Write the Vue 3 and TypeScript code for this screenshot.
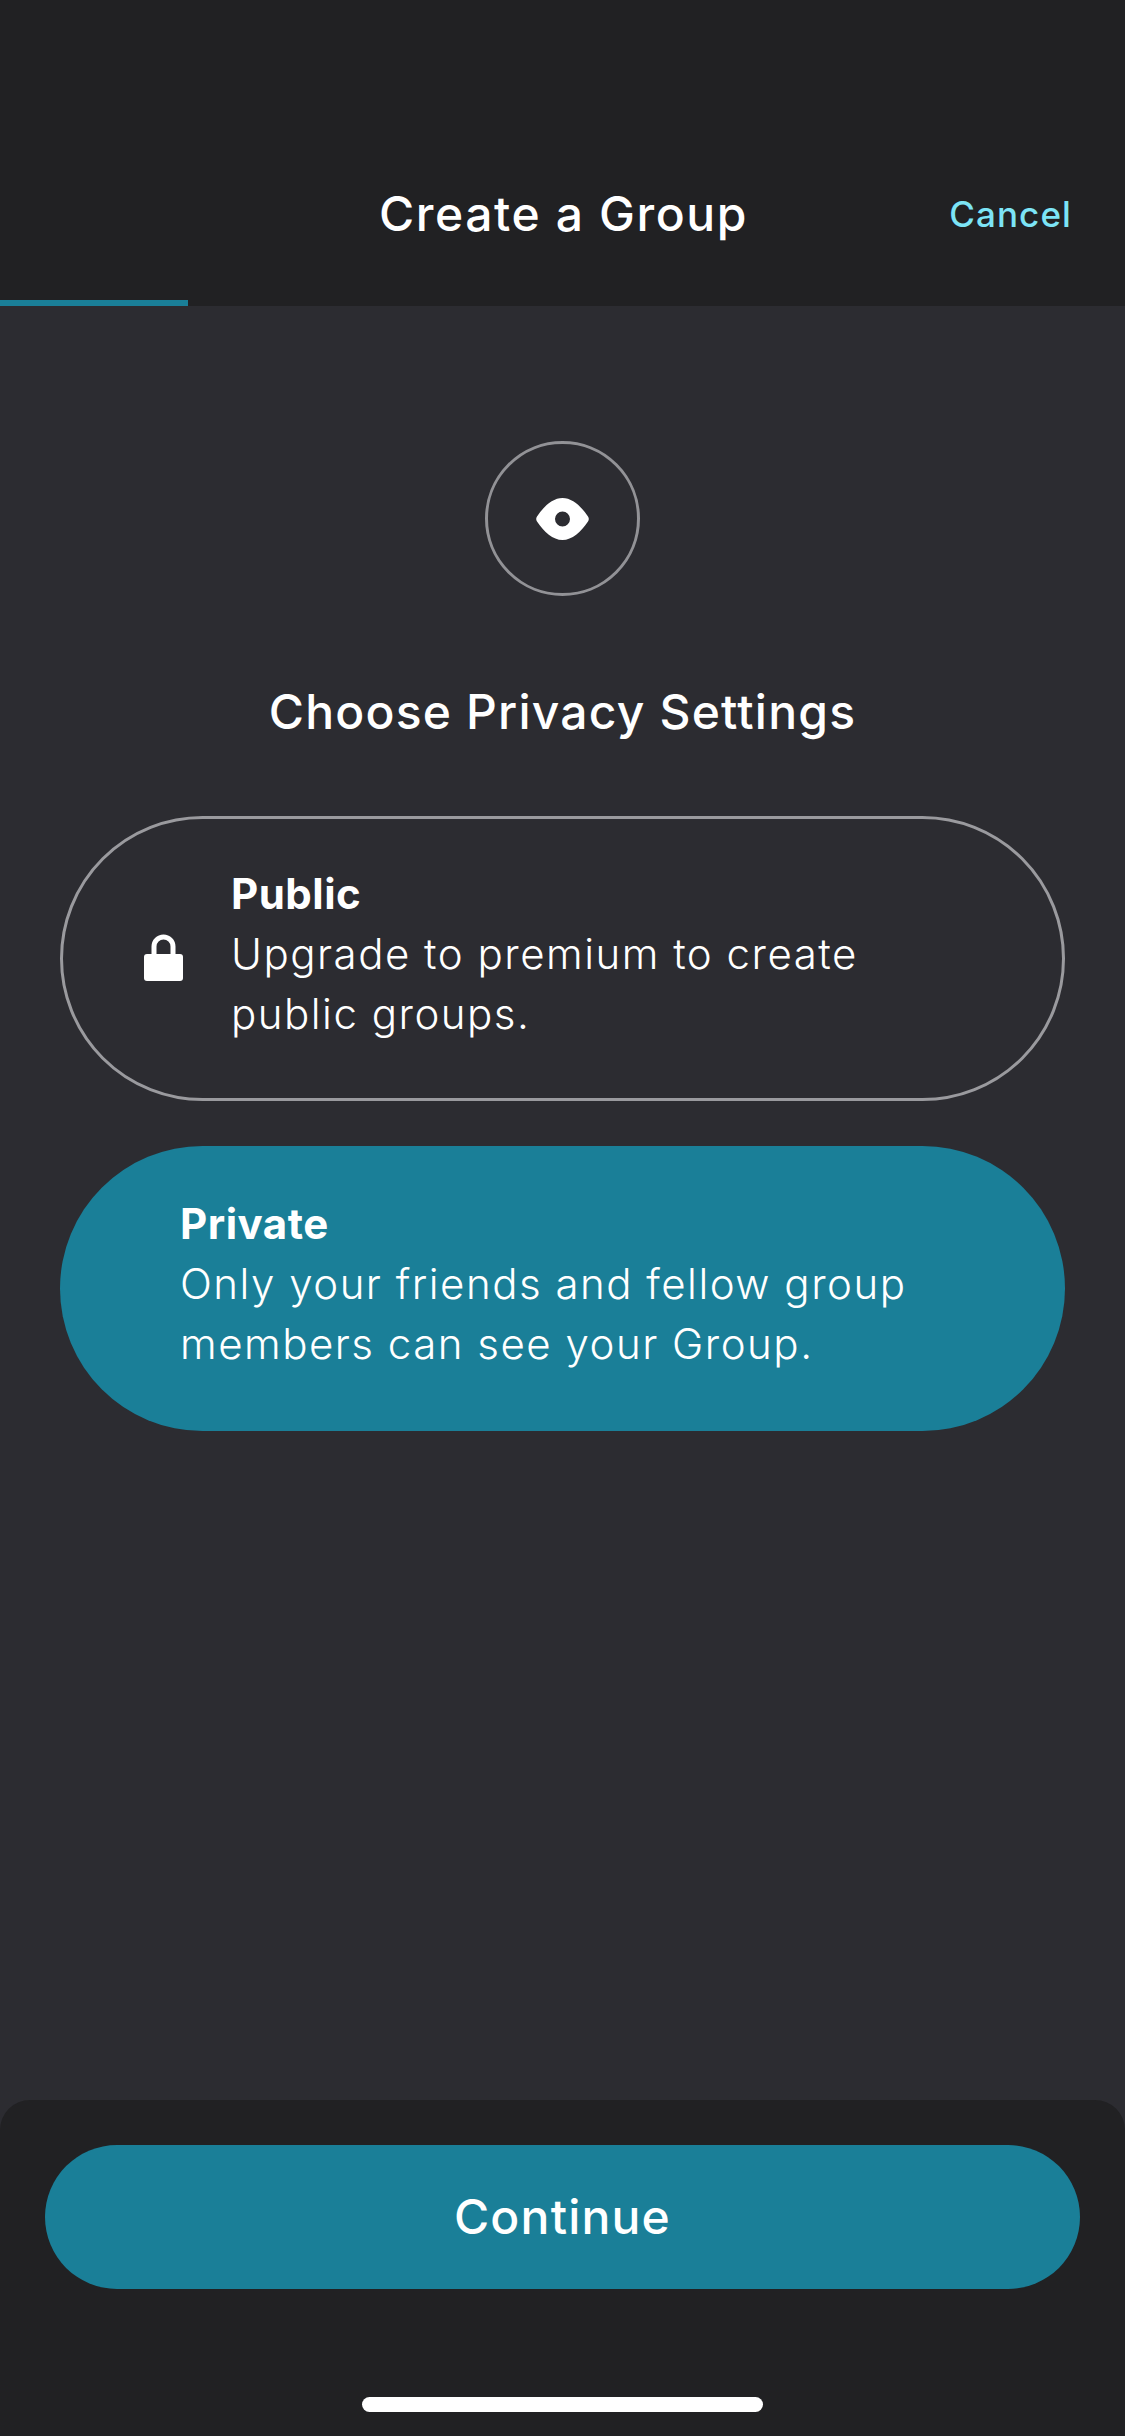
<script setup lang="ts">
interface PrivacyOption {
  title: string
  lines: string[]
  locked: boolean
}

const options: PrivacyOption[] = [
  { title: 'Public', lines: ['Upgrade to premium to create', 'public groups.'], locked: true },
  { title: 'Private', lines: ['Only your friends and fellow group', 'members can see your Group.'], locked: false },
]
</script>

<template>
  <div class="screen">
    <header class="header">
      <div class="header__row">
        <span />
        <h1 class="header__title">Create a Group</h1>
        <span class="header__cancel">Cancel</span>
      </div>
      <div class="header__progress" />
    </header>

    <main class="main">
      <div class="badge">
        <svg width="53" height="42" viewBox="0 0 53 42">
          <path
            fill="#fff"
            fill-rule="evenodd"
            d="M1 18.5C8 8 17 0 26.5 0S45 8 52 18.5q1.6 2.5 0 5C45 34 36 42 26.5 42S8 34 1 23.5q-1.6-2.5 0-5ZM26.5 13.5a7.5 7.5 0 1 0 0 15a7.5 7.5 0 1 0 0-15Z"
          />
        </svg>
      </div>
      <h2 class="heading">Choose Privacy Settings</h2>

      <div class="options">
        <div
          v-for="opt in options"
          :key="opt.title"
          class="option"
          :class="opt.locked ? 'option--locked' : 'option--active'"
        >
          <svg v-if="opt.locked" class="option__lock" width="39" height="47" viewBox="0 0 39 47">
            <path d="M10 24V12.5a9.5 9.5 0 0 1 19 0V24" fill="none" stroke="#fff" stroke-width="5" />
            <rect x="0" y="20" width="39" height="27" rx="3" fill="#fff" />
          </svg>
          <div class="option__text">
            <div class="option__title">{{ opt.title }}</div>
            <div v-for="line in opt.lines" :key="line" class="option__line">{{ line }}</div>
          </div>
        </div>
      </div>
    </main>

    <footer class="footer">
      <button class="continue">Continue</button>
      <div class="home-indicator" />
    </footer>
  </div>
</template>

<style>
html,
body {
  margin: 0;
  background: #2c2c31;
}
</style>

<style scoped>
.screen {
  width: 1125px;
  height: 2436px;
  display: flex;
  flex-direction: column;
  background: #2c2c31;
  color: #fff;
  font-family: Inter, "Liberation Sans", sans-serif;
  overflow: hidden;
}

.header {
  height: 306px;
  flex: none;
  display: flex;
  flex-direction: column;
  background: #212123;
}

.header__row {
  flex: 1;
  display: grid;
  grid-template-columns: 1fr auto 1fr;
  align-items: center;
  padding: 128px 53px 0 55px;
}

.header__title {
  margin: 0;
  font-size: 48px;
  font-weight: 500;
  line-height: 60px;
  letter-spacing: 1.6px;
}

.header__cancel {
  justify-self: end;
  font-size: 35px;
  font-weight: 500;
  letter-spacing: 1.1px;
  color: #7ce4f6;
}

.header__progress {
  width: 188px;
  height: 6px;
  background: #1a7f98;
}

.main {
  flex: 1;
  display: flex;
  flex-direction: column;
  align-items: center;
  padding: 135px 60px 0;
}

.badge {
  width: 155px;
  height: 155px;
  box-sizing: border-box;
  display: flex;
  align-items: center;
  justify-content: center;
  border: 3px solid #929296;
  border-radius: 50%;
}

.heading {
  margin: 86px 0 0;
  font-size: 48px;
  font-weight: 500;
  line-height: 60px;
  letter-spacing: 1.2px;
}

.options {
  align-self: stretch;
  margin-top: 74px;
  display: flex;
  flex-direction: column;
  gap: 45px;
}

.option {
  height: 285px;
  box-sizing: border-box;
  display: flex;
  align-items: center;
  border-radius: 143px;
}

.option--locked {
  border: 3px solid #9a9a9e;
  padding-left: 81px;
}

.option--active {
  background: #1a7f98;
  padding-left: 120px;
}

.option__lock {
  flex: none;
  margin: 0 48px 2px 0;
}

.option__text {
  padding-bottom: 10px;
}

.option__title {
  font-size: 42px;
  font-weight: 700;
  line-height: 60px;
  letter-spacing: 0.5px;
}

.option__line {
  font-size: 42px;
  font-weight: 300;
  line-height: 60px;
  letter-spacing: 1.5px;
}

.footer {
  height: 336px;
  flex: none;
  box-sizing: border-box;
  display: flex;
  flex-direction: column;
  align-items: center;
  padding: 45px 45px 0;
  background: #212123;
  border-radius: 30px 30px 0 0;
}

.continue {
  width: 100%;
  height: 144px;
  padding: 0 0 2px;
  border: 0;
  border-radius: 72px;
  background: #1a7f98;
  color: #fff;
  font-family: inherit;
  font-size: 48px;
  font-weight: 500;
  letter-spacing: 1.2px;
}

.home-indicator {
  width: 401px;
  height: 15px;
  margin-top: 108px;
  border-radius: 8px;
  background: #fff;
}
</style>
